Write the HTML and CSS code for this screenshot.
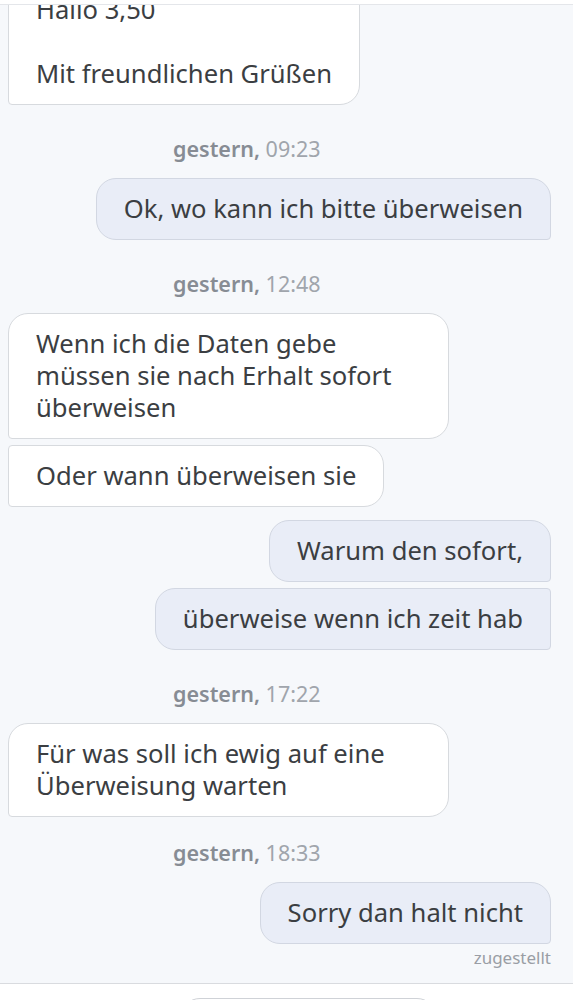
FILE: index.html
```html
<!DOCTYPE html>
<html lang="de">
  <head>
    <meta charset="UTF-8" />
    <meta name="viewport" content="width=device-width, initial-scale=1.0" />
    <title>Nachrichten</title>
    <link rel="stylesheet" href="styles.css">
  </head>

  <body>
    <div class="screen">
      <div class="topbar"></div>

      <div class="chat">
        <div class="msg in">Hallo 3,50<br><br>Mit freundlichen Grüßen</div>

        <div class="stamp"><b>gestern,</b> 09:23</div>
        <div class="msg out">Ok, wo kann ich bitte überweisen</div>

        <div class="stamp"><b>gestern,</b> 12:48</div>
        <div class="msg in">Wenn ich die Daten gebe müssen sie nach Erhalt sofort überweisen</div>
        <div class="msg in next">Oder wann überweisen sie</div>

        <div class="msg out switch">Warum den sofort,</div>
        <div class="msg out next">überweise wenn ich zeit hab</div>

        <div class="stamp"><b>gestern,</b> 17:22</div>
        <div class="msg in">Für was soll ich ewig auf eine Überweisung warten</div>

        <div class="stamp tight"><b>gestern,</b> 18:33</div>
        <div class="msg out">Sorry dan halt nicht</div>
        <div class="status">zugestellt</div>
      </div>

      <div class="composer">
        <div class="field"></div>
      </div>
    </div>
  </body>
</html>
```

FILE: styles.css
```css
html,
body {
  margin: 0;
  padding: 0;
  height: 100%;
}

body {
  font-family: "Noto Sans", "Open Sans", sans-serif;
  color: #3b3e42;
  background: #fff;
}

.screen {
  display: flex;
  flex-flow: column;
  height: 100%;
  overflow: hidden;
}

.topbar {
  height: 4px;
  flex-shrink: 0;
  background: #fff;
  border-bottom: 1px solid #e4e6ea;
}

.chat {
  flex: 1;
  display: flex;
  flex-flow: column;
  justify-content: flex-end;
  overflow: hidden;
  min-height: 0;
  padding: 0 22px 16px 8px;
  background: #f6f8fb;
}

.msg {
  flex-shrink: 0;
  box-sizing: border-box;
  padding: 14px 27px;
  font-size: 25.6px;
  line-height: 32px;
  border: 1px solid #d7dade;
  border-radius: 20px;
}

.msg.in {
  align-self: flex-start;
  max-width: 441px;
  background: #fff;
  border-bottom-left-radius: 4px;
}

.msg.out {
  align-self: flex-end;
  max-width: 480px;
  background: #e9edf7;
  border-color: #d2d7e2;
  border-bottom-right-radius: 4px;
}

.msg.next {
  margin-top: 6px;
}
.msg.in.next {
  border-top-left-radius: 4px;
}
.msg.out.next {
  border-top-right-radius: 4px;
}

.msg.switch {
  margin-top: 13px;
}

.stamp {
  flex-shrink: 0;
  margin: 30px 0 15px;
  padding-left: 165px;
  font-size: 21.5px;
  line-height: 28px;
  color: #a0a5ac;
}
.stamp b {
  font-weight: 600;
  color: #878c94;
}
.stamp.tight {
  margin-top: 22px;
}

.status {
  flex-shrink: 0;
  margin-top: 5px;
  align-self: flex-end;
  font-size: 17px;
  line-height: 18px;
  color: #9a9ea5;
}

.composer {
  flex-shrink: 0;
  height: 17px;
  padding-top: 14px;
  box-sizing: border-box;
  border-top: 1px solid #d9dbdf;
  background: #fff;
  overflow: hidden;
}

.composer .field {
  width: 257px;
  height: 40px;
  margin-left: 180px;
  box-sizing: border-box;
  border: 1px solid #cfd2d7;
  border-radius: 20px;
}
```
